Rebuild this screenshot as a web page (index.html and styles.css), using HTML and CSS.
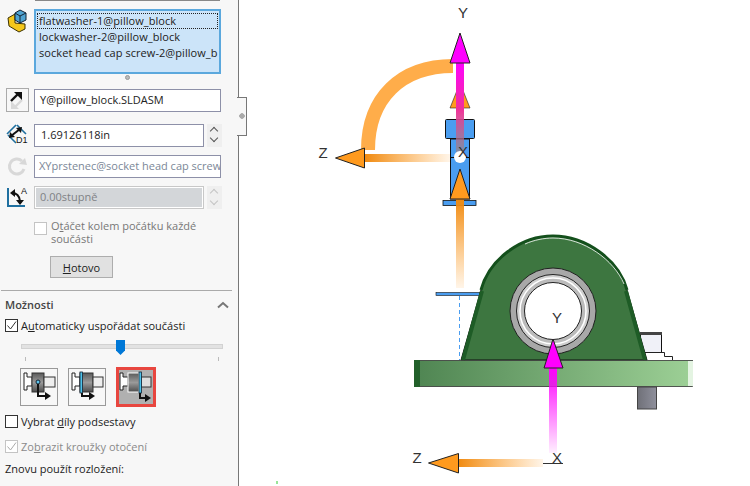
FILE: index.html
```html
<!DOCTYPE html>
<html lang="cs">
<head>
    <meta charset="UTF-8">
    <title>Rozložená sestava</title>
    <link rel="stylesheet" href="styles.css">
</head>
<body>
    <aside class="panel">
        <div class="prev-box"></div>

        <div class="row list-row">
            <svg class="icon" width="22" height="24" viewBox="0 0 22 24">
                <path d="M2 9 L9 5 L9 14 L19 15 L19 20 L13 23 L3 17 Z" fill="#f5c71a" stroke="#3a3000" stroke-width="1"/>
                <path d="M9 4 L14 1 L20 4 L20 11 L14 14 L9 11 Z" fill="#4fa3d1" stroke="#123" stroke-width="1"/>
                <path d="M9 4 L14 7 L20 4 M14 7 V14" fill="none" stroke="#123" stroke-width="1"/>
            </svg>
            <div class="listbox">
                <div class="list-item first">flatwasher-1@pillow_block</div>
                <div class="list-item">lockwasher-2@pillow_block</div>
                <div class="list-item">socket head cap screw-2@pillow_b</div>
            </div>
        </div>
        <div class="handle"></div>

        <div class="row y-row">
            <div class="icon-btn">
                <svg width="20" height="20" viewBox="0 0 20 20">
                    <path d="M14 10 L7 17" stroke="#d9d9d9" stroke-width="2.4"/>
                    <path d="M3 11 V19 H11 Z" fill="#d9d9d9"/>
                    <path d="M3 11 L11 3" stroke="#111" stroke-width="2.4"/>
                    <path d="M6 2 H14 V10 Z" fill="#111"/>
                </svg>
            </div>
            <div class="field">Y@pillow_block.SLDASM</div>
        </div>

        <div class="row d-row">
            <svg class="icon" width="22" height="24" viewBox="0 0 22 24">
                <path d="M1 11 L10 2 M11 2 L20 11 M2 12 L10 20" fill="none" stroke="#1f6f9f" stroke-width="1.6"/>
                <path d="M5 13 L14 6" stroke="#111" stroke-width="2"/>
                <path d="M3 15 L4 9 L9 14 Z M16 4 L15 10 L10 5 Z" fill="#111"/>
                <text x="10" y="20" class="icon-text">D1</text>
            </svg>
            <div class="field short">1.69126118in</div>
            <div class="spin"><span class="up"></span><span class="down"></span></div>
        </div>

        <div class="row xy-row">
            <svg class="icon" width="22" height="22" viewBox="0 0 22 22">
                <path d="M18 13 A7.5 7.5 0 1 1 16 5" fill="none" stroke="#d8d8d8" stroke-width="3"/>
                <path d="M13 8 L21 9 L19 2 Z" fill="#d8d8d8"/>
            </svg>
            <div class="field muted">XYprstenec@socket head cap screw</div>
        </div>

        <div class="row angle-row">
            <svg class="icon" width="22" height="22" viewBox="0 0 22 22">
                <path d="M2 1 V19 H19" fill="none" stroke="#1f6f9f" stroke-width="2"/>
                <path d="M6 6 Q13 6 14 14" fill="none" stroke="#111" stroke-width="2"/>
                <path d="M9 2 V10 L4 6 Z M10 13 H18 L14 18 Z" fill="#111"/>
                <text x="15" y="7" class="icon-text">A</text>
            </svg>
            <div class="field disabled"><span>0.00stupně</span></div>
            <div class="spin off"><span class="up"></span><span class="down"></span></div>
        </div>

        <label class="rotate-check">
            <span class="check off"></span>
            <span class="check-text">O<u>t</u>áčet kolem počátku každé součásti</span>
        </label>

        <button class="done"><u>H</u>otovo</button>

        <div class="section-head">
            <strong>Možnosti</strong>
            <svg width="12" height="8" viewBox="0 0 12 8"><path d="M1 6.5 L6 2 L11 6.5" fill="none" stroke="#777" stroke-width="2"/></svg>
        </div>

        <label class="opt auto-opt">
            <span class="check on">
                <svg width="11" height="11" viewBox="0 0 11 11"><path d="M1.5 5.5 L4.5 9 L10 1.5" fill="none" stroke="#333" stroke-width="1"/></svg>
            </span>
            <span>A<u>u</u>tomaticky uspořádat součásti</span>
        </label>

        <div class="slider">
            <div class="track"></div>
            <div class="thumb"></div>
            <div class="ticks"><i></i><i></i></div>
        </div>

        <div class="modes">
            <div class="mode">
                <svg width="36" height="36" viewBox="0 0 36 36">
                    <defs>
                        <linearGradient id="body" x1="0" y1="0" x2="0" y2="1">
                            <stop offset="0" stop-color="#5a5a5a"/>
                            <stop offset="0.5" stop-color="#9a9a9a"/>
                            <stop offset="1" stop-color="#4c4c4c"/>
                        </linearGradient>
                    </defs>
                    <path d="M3 4 H6 V8 H11 V17 H6 V21 H3 Z" fill="#fff" stroke="#222"/>
                    <rect x="11" y="4" width="12" height="19" fill="url(#body)" stroke="#333"/>
                    <rect x="23" y="8" width="11" height="10" fill="#eee" stroke="#333"/>
                    <circle cx="17" cy="13" r="2" fill="#5cc6ee" stroke="#123"/>
                    <path d="M17 15 V27 H25" fill="none" stroke="#111" stroke-width="2"/>
                    <path d="M24 23 L30 27 L24 31 Z" fill="#111"/>
                </svg>
            </div>
            <div class="mode">
                <svg width="36" height="36" viewBox="0 0 36 36">
                    <path d="M3 4 H6 V8 H11 V17 H6 V21 H3 Z" fill="#fff" stroke="#222"/>
                    <rect x="11" y="4" width="13" height="19" fill="url(#body)" stroke="#333"/>
                    <rect x="24" y="8" width="10" height="10" fill="#eee" stroke="#333"/>
                    <rect x="11" y="3" width="2.5" height="21" fill="#4fc3ea" stroke="#123" stroke-width="0.8"/>
                    <path d="M13 24 V27 H21" fill="none" stroke="#111" stroke-width="2"/>
                    <path d="M20 23 L26 27 L20 31 Z" fill="#111"/>
                </svg>
            </div>
            <div class="mode active">
                <svg width="34" height="34" viewBox="0 0 34 34">
                    <path d="M1 3 H4 V7 H9 V16 H4 V20 H1 Z" fill="#fff" stroke="#222"/>
                    <rect x="9" y="3" width="11" height="19" fill="url(#body)" stroke="#fff"/>
                    <rect x="22" y="7" width="10" height="10" fill="#ddd" stroke="#333"/>
                    <rect x="20" y="2" width="2.5" height="21" fill="#4fc3ea" stroke="#123" stroke-width="0.8"/>
                    <path d="M21 23 V28 H27" fill="none" stroke="#111" stroke-width="2"/>
                    <path d="M26 24 L32 28 L26 32 Z" fill="#111"/>
                </svg>
            </div>
        </div>

        <label class="opt sub-opt">
            <span class="check"></span>
            <span>Vybrat <u>d</u>íly podsestavy</span>
        </label>

        <label class="opt ring-opt muted-opt">
            <span class="check off on">
                <svg width="11" height="11" viewBox="0 0 11 11"><path d="M1.5 5.5 L4.5 9 L10 1.5" fill="none" stroke="#aaa" stroke-width="1"/></svg>
            </span>
            <span>Zo<u>b</u>razit kroužky otočení</span>
        </label>

        <div class="reuse">Znovu použít rozložení:</div>

        <div class="notch"></div>
    </aside>

    <main class="view">
        <svg class="scene" width="511" height="486" viewBox="239 0 511 486">
            <defs>
                <linearGradient id="plate" x1="0" y1="0" x2="1" y2="0">
                    <stop offset="0" stop-color="#4f8552"/>
                    <stop offset="1" stop-color="#9dd096"/>
                </linearGradient>
                <linearGradient id="bolt" x1="0" y1="0" x2="1" y2="0">
                    <stop offset="0" stop-color="#6f7078"/>
                    <stop offset="1" stop-color="#8f909c"/>
                </linearGradient>
                <linearGradient id="magUp" gradientUnits="userSpaceOnUse" x1="0" y1="63" x2="0" y2="155">
                    <stop offset="0" stop-color="#ff00ff"/>
                    <stop offset="0.5" stop-color="#f0309a"/>
                    <stop offset="1" stop-color="#9a8a78" stop-opacity="0.6"/>
                </linearGradient>
                <linearGradient id="magLow" gradientUnits="userSpaceOnUse" x1="0" y1="368" x2="0" y2="453">
                    <stop offset="0" stop-color="#ff00ff"/>
                    <stop offset="1" stop-color="#ff00ff" stop-opacity="0.06"/>
                </linearGradient>
                <linearGradient id="orgLeft1" gradientUnits="userSpaceOnUse" x1="365" y1="0" x2="450" y2="0">
                    <stop offset="0" stop-color="#f08a10"/>
                    <stop offset="1" stop-color="#ff9a1e" stop-opacity="0.1"/>
                </linearGradient>
                <linearGradient id="orgLeft2" gradientUnits="userSpaceOnUse" x1="458" y1="0" x2="543" y2="0">
                    <stop offset="0" stop-color="#f08a10"/>
                    <stop offset="1" stop-color="#ff9a1e" stop-opacity="0.1"/>
                </linearGradient>
                <linearGradient id="orgUp" gradientUnits="userSpaceOnUse" x1="0" y1="199" x2="0" y2="288">
                    <stop offset="0" stop-color="#f08a10"/>
                    <stop offset="1" stop-color="#ff9a1e" stop-opacity="0.1"/>
                </linearGradient>
            </defs>

            <!-- screw -->
            <rect x="450.500" y="139" width="19" height="60" fill="#4a9df0" stroke="#111"/>
            <rect x="445.500" y="119.500" width="29" height="19" rx="1" fill="#4a9df0" stroke="#111"/>
            <rect x="443" y="200.500" width="33" height="5" fill="#4a9df0" stroke="#111" stroke-width="0.8"/>
            <path d="M450 157.500 H470" stroke="#111"/>

            <!-- rotation ring -->
            <path d="M453 66 C401 66 368 98 368 150" fill="none" stroke="#ffad4a" stroke-width="14"/>
            <path d="M460 83 L470 108 H450 Z" fill="#ff9a1e" stroke="#222" stroke-width="0.6"/>

            <!-- top axis -->
            <rect x="456" y="63" width="8" height="92" fill="url(#magUp)"/>
            <path d="M460 33 L470 63 H450 Z" fill="#ff00ff" stroke="#222"/>
            <circle cx="460" cy="157" r="6" fill="#fff"/>

            <rect x="365" y="154" width="85" height="8" fill="url(#orgLeft1)"/>
            <path d="M335.500 158 L364.500 148 V168 Z" fill="#ff9a1e" stroke="#222"/>

            <rect x="456" y="199" width="8" height="89" fill="url(#orgUp)"/>
            <path d="M460 169 L470 199 H450 Z" fill="#ff9a1e" stroke="#222"/>

            <text class="axis" x="463" y="18" text-anchor="middle">Y</text>
            <text class="axis" x="323" y="158" text-anchor="middle">Z</text>
            <text class="axis" x="463" y="157" text-anchor="middle">X</text>

            <!-- washer and dashed line -->
            <rect x="436" y="292.500" width="44" height="3" fill="#4a9df0" stroke="#111" stroke-width="0.6"/>
            <path d="M459.500 296 V360" stroke="#4a9df0" stroke-dasharray="4 3"/>

            <!-- nut behind block -->
            <rect x="640.500" y="332.500" width="21" height="20" fill="#f0f1f8" stroke="#111"/>
            <rect x="640" y="332" width="22" height="3" fill="#444"/>
            <path d="M640.500 352.500 H664.500 V356.500 H672.500 V360" fill="#fff" stroke="#222"/>

            <!-- block -->
            <path d="M461 360 L481 290 C489 260 520 236 553 236 C586 236 619 260 627 290 L647 360 Z" fill="#3d7640" stroke="#111"/>
            <path d="M481 290 C489 260 520 236 553 236 C586 236 619 260 627 290" fill="none" stroke="#14501c" stroke-width="3"/>
            <path d="M525 244 C534 240 544 238 553 238 C584 238 614 260 624 284" fill="none" stroke="#fff" stroke-width="0.8"/>
            <path d="M463 360 L482 291 M645 360 L626 291" stroke="#1e5c26" stroke-width="4"/>

            <circle cx="553" cy="311" r="43" fill="#a8a8a8" stroke="#222"/>
            <circle cx="553" cy="311" r="36.500" fill="#d0d0d0" stroke="#222"/>
            <circle cx="553" cy="311" r="33" fill="#bbb" stroke="#fff" stroke-width="1.500"/>
            <circle cx="553" cy="311" r="28.500" fill="#fff" stroke="#222"/>

            <rect x="414.500" y="360.500" width="278" height="26" fill="url(#plate)" stroke="#333" stroke-width="0.8"/>
            <rect x="414" y="360" width="6" height="27" fill="#22602a"/>
            <rect x="688" y="361" width="5" height="25" fill="#e4f4e2"/>
            <rect x="637.500" y="387" width="19" height="22" fill="url(#bolt)" stroke="#444"/>

            <!-- lower axis -->
            <rect x="549" y="368" width="8" height="85" fill="url(#magLow)"/>
            <path d="M553 339 L563 368 H544 Z" fill="#ff00ff" stroke="#222"/>

            <rect x="458" y="459" width="85" height="8" fill="url(#orgLeft2)"/>
            <path d="M428.500 463 L458.500 453.500 V473 Z" fill="#ff9a1e" stroke="#222"/>
            <path d="M543 463.500 H563" stroke="#333"/>

            <text class="axis" x="557" y="323" text-anchor="middle">Y</text>
            <text class="axis" x="557" y="463" text-anchor="middle">X</text>
            <text class="axis" x="417" y="463" text-anchor="middle">Z</text>

            <path d="M277 481 V484" stroke="#3c3"/>
        </svg>
    </main>
</body>
</html>
```

FILE: styles.css
```css
body {
    margin: 0;
    width: 750px;
    height: 486px;
    overflow: hidden;
    display: flex;
    background: #fff;
    font-family: "Open Sans", "Noto Sans", sans-serif;
    font-size: 11px;
    color: #222;
}

.panel {
    position: relative;
    box-sizing: border-box;
    width: 239px;
    height: 486px;
    flex: none;
    background: #f7f7f7;
    border-right: 1px solid #777;
}

.view {
    flex: 1;
}

.scene {
    display: block;
}

.axis {
    font-family: "Liberation Sans", sans-serif;
    font-size: 15px;
    fill: #333;
}

.icon-text {
    font-family: "Liberation Sans", sans-serif;
    font-size: 9px;
    fill: #111;
}

.prev-box {
    margin-left: 35px;
    width: 185px;
    height: 1px;
    background: #888;
}

.row {
    display: flex;
    align-items: center;
    gap: 6px;
    padding-left: 6px;
}

.icon {
    flex: none;
    display: block;
}

.list-row {
    margin-top: 8px;
    align-items: flex-start;
    padding-top: 0;
}

.listbox {
    box-sizing: border-box;
    width: 187px;
    height: 65px;
    padding: 2px 0 0 1px;
    background: #cce4f9;
    border: 2px solid #5ba8dd;
    white-space: nowrap;
    overflow: hidden;
}

.list-item {
    height: 16px;
    line-height: 15px;
    padding-left: 2px;
    letter-spacing: 0.06px;
}

.list-item.first {
    outline: 1px dotted #222;
    outline-offset: -1px;
    width: 179px;
}

.handle {
    width: 5px;
    height: 5px;
    margin: 1px 0 0 125px;
    border-radius: 50%;
    background: #bbb;
    border: 1px solid #999;
    box-sizing: border-box;
}

.field {
    box-sizing: border-box;
    width: 187px;
    height: 23px;
    line-height: 20px;
    padding-left: 5px;
    background: #fff;
    border: 1px solid #8d90a8;
    white-space: nowrap;
    overflow: hidden;
}

.field.short {
    width: 170px;
    padding-left: 6px;
}

.field.muted {
    color: #7b8797;
    padding-left: 4px;
}

.field.disabled {
    width: 170px;
    padding: 1px;
    color: #7f8286;
    border-color: #c8c8c8;
}

.field.disabled span {
    display: block;
    height: 19px;
    line-height: 18px;
    padding-left: 4px;
    background: #d3d6d9;
}

.icon-btn {
    box-sizing: border-box;
    width: 23px;
    height: 24px;
    margin-right: -1px;
    display: flex;
    align-items: center;
    justify-content: center;
    border: 1px solid #aaa;
}

.y-row {
    margin-top: 8px;
}

.d-row {
    margin-top: 11px;
}

.xy-row {
    margin-top: 8px;
}

.angle-row {
    margin-top: 8px;
}

.spin {
    display: flex;
    flex-direction: column;
    width: 15px;
    height: 23px;
    margin-left: -3px;
    background: #efefef;
}

.spin span {
    flex: 1;
    display: block;
    position: relative;
}

.spin .up::after,
.spin .down::after {
    content: "";
    position: absolute;
    left: 4px;
    width: 5px;
    height: 5px;
    border-left: 1.5px solid #555;
    border-top: 1.5px solid #555;
    transform: rotate(45deg);
    top: 4px;
}

.spin .down::after {
    transform: rotate(225deg);
    top: 0;
}

.spin.off .up::after,
.spin.off .down::after {
    border-color: #c4c4c4;
}

.check {
    box-sizing: border-box;
    flex: none;
    display: inline-flex;
    align-items: center;
    justify-content: center;
    width: 13px;
    height: 13px;
    background: #fff;
    border: 1px solid #333;
}

.check.off {
    border-color: #c4c4c4;
}

.rotate-check {
    display: flex;
    gap: 4px;
    margin: 10px 0 0 34px;
    color: #777;
    line-height: 13px;
}

.rotate-check .check {
    margin-top: 3px;
}

.check-text {
    width: 170px;
}

.done {
    display: block;
    box-sizing: border-box;
    width: 63px;
    height: 22px;
    margin: 11px 0 0 50px;
    padding: 0;
    background: #e1e1e1;
    border: 1px solid #adadad;
    font: inherit;
    color: #222;
}

.section-head {
    display: flex;
    align-items: center;
    justify-content: space-between;
    box-sizing: border-box;
    width: 231px;
    margin: 12px 0 0 1px;
    padding: 6px 3px 0 4px;
    border-top: 1px solid #aaa;
    color: #444;
}

.section-head strong {
    font-weight: 600;
}

.opt {
    display: flex;
    align-items: center;
    gap: 3px;
    margin-left: 5px;
    white-space: nowrap;
}

.auto-opt {
    margin-top: 6px;
}

.slider {
    position: relative;
    height: 20px;
    margin: 7px 0 0 21px;
    width: 202px;
}

.track {
    position: absolute;
    top: 4px;
    left: 0;
    right: 0;
    height: 3px;
    background: #e2e2e2;
    border: 1px solid #d2d2d2;
}

.thumb {
    position: absolute;
    left: 95px;
    top: 0;
    width: 9px;
    height: 15px;
    background: #0078d7;
    clip-path: polygon(0 0, 100% 0, 100% 70%, 50% 100%, 0 70%);
}

.ticks {
    position: absolute;
    top: 17px;
    left: 4px;
    right: 4px;
    display: flex;
    justify-content: space-between;
}

.ticks i {
    width: 1px;
    height: 4px;
    background: #bbb;
}

.modes {
    display: flex;
    align-items: center;
    gap: 10px;
    margin: 7px 0 0 20px;
}

.mode {
    box-sizing: border-box;
    width: 38px;
    height: 38px;
    border: 1px solid #999;
}

.mode svg {
    display: block;
}

.mode.active {
    width: 40px;
    height: 40px;
    background: #b0b0b0;
    border: 3px solid #e8463f;
}

.sub-opt {
    margin-top: 7px;
}

.ring-opt {
    margin-top: 10px;
}

.muted-opt {
    color: #8a8a8a;
}

.reuse {
    margin: 7px 0 0 5px;
    color: #222;
}

.notch {
    position: absolute;
    left: 237px;
    top: 97px;
    width: 9px;
    height: 37px;
    background: #f7f7f7 radial-gradient(circle at 5px 18px, #aaa 2.5px, transparent 3px);
    border: 1px solid #777;
    border-left: none;
}
```
